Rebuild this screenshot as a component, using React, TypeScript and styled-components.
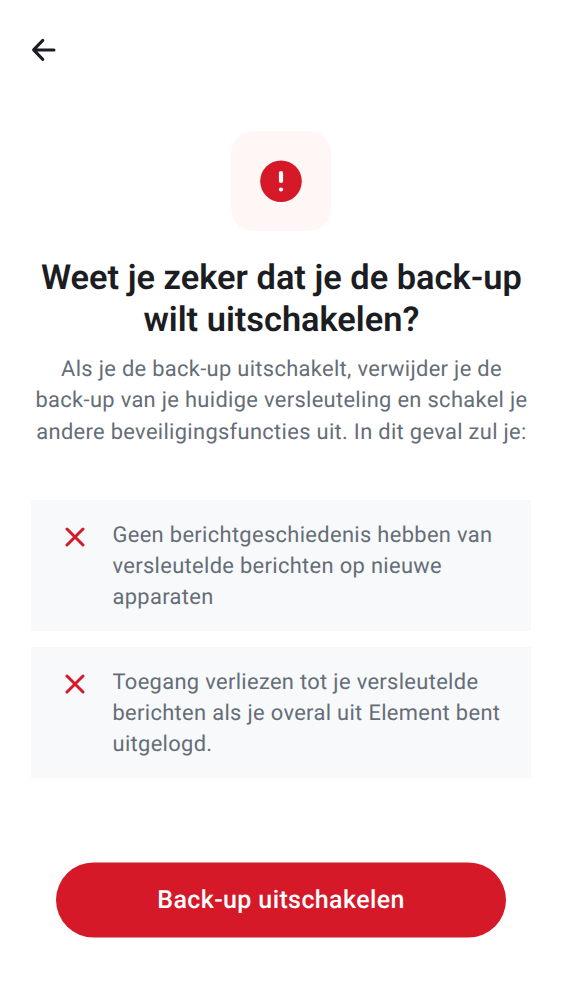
import React from 'react';
import styled, { createGlobalStyle } from 'styled-components';

const GlobalStyle = createGlobalStyle`
  * { box-sizing: border-box; }
  body {
    margin: 0;
    background: #fff;
    font-family: Roboto, sans-serif;
    text-rendering: geometricPrecision;
  }
`;

const Screen = styled.main`
  display: flex;
  flex-direction: column;
  width: 562px;
  height: 1000px;
  padding: 31px 31px 63px;
  background: #fff;
`;

const BackButton = styled.button`
  display: flex;
  align-self: flex-start;
  width: 26px;
  height: 38px;
  padding: 0;
  border: 0;
  background: none;
  align-items: center;
`;

const Header = styled.header`
  display: flex;
  flex-direction: column;
  align-items: center;
  margin-top: 62px;
  text-align: center;
`;

const AlertTile = styled.div`
  display: flex;
  align-items: center;
  justify-content: center;
  width: 100px;
  height: 100px;
  border-radius: 22px;
  background: #fff7f6;
`;

const Line = styled.span<{ $spacing?: number }>`
  display: block;
  white-space: nowrap;
  letter-spacing: ${(p) => p.$spacing ?? 0}px;
`;

const Title = styled.h1`
  margin: 26px 0 0;
  padding-left: 0.8px;
  font-size: 34.375px;
  line-height: 42px;
  font-weight: 600;
  color: #1b1d22;
`;

const Description = styled.p`
  margin: 13px 0 0;
  padding-left: 1px;
  font-size: 21.875px;
  line-height: 31.25px;
  color: #656d77;
`;

const List = styled.ul`
  display: flex;
  flex-direction: column;
  gap: 16px;
  margin: 52px 0 0;
  padding: 0;
  list-style: none;
`;

const Item = styled.li`
  display: flex;
  height: 131px;
  padding: 20px 25px 0 34px;
  background: #f7f9fb;
`;

const ItemIcon = styled.span`
  display: flex;
  width: 20px;
  height: 20px;
  margin: 7.6px 27.5px 0 0;
`;

const ItemText = styled.div`
  font-size: 21.875px;
  line-height: 31.25px;
  color: #656d77;
`;

const DangerButton = styled.button`
  height: 75px;
  margin: auto 25px 0;
  padding: 0;
  border: 0;
  border-radius: 38px;
  background: #d51928;
  color: #fff;
  font-family: inherit;
  font-size: 25px;
  font-weight: 500;
  text-rendering: inherit;
  transform: translateY(0.5px);
`;

const items = [
  ['Geen berichtgeschiedenis hebben van', 'versleutelde berichten op nieuwe', 'apparaten'],
  ['Toegang verliezen tot je versleutelde', 'berichten als je overal uit Element bent', 'uitgelogd.'],
];

export default function App() {
  return (
    <Screen>
      <GlobalStyle />
      <BackButton aria-label="Terug">
        <svg width="26" height="26" viewBox="0 0 26 26" fill="none" stroke="#1b1d22" strokeWidth="3" strokeLinecap="round" strokeLinejoin="round">
          <path d="M11.8 3.4 2.6 12.9l9.2 9.5M3 12.9h20" />
        </svg>
      </BackButton>
      <Header>
        <AlertTile>
          <svg width="42" height="42" viewBox="0 0 42 42">
            <circle cx="21" cy="21.2" r="20.8" fill="#d51928" />
            <path d="M21 13v8" stroke="#fff" strokeWidth="4.2" strokeLinecap="round" />
            <circle cx="21" cy="29.5" r="2.1" fill="#fff" />
          </svg>
        </AlertTile>
        <Title>
          <Line $spacing={0.02}>Weet je zeker dat je de back-up</Line>
          <Line>wilt uitschakelen?</Line>
        </Title>
        <Description>
          <Line $spacing={0.33}>Als je de back-up uitschakelt, verwijder je de</Line>
          <Line $spacing={0.33}>back-up van je huidige versleuteling en schakel je</Line>
          <Line $spacing={0.33}>andere beveiligingsfuncties uit. In dit geval zul je:</Line>
        </Description>
      </Header>
      <List>
        {items.map((lines) => (
          <Item key={lines[0]}>
            <ItemIcon>
              <svg width="20" height="20" viewBox="0 0 20 20" stroke="#d51928" strokeWidth="3" strokeLinecap="round">
                <path d="m2 2 16 16M18 2 2 18" />
              </svg>
            </ItemIcon>
            <ItemText>
              {lines.map((line) => (
                <Line key={line} $spacing={0.34}>{line}</Line>
              ))}
            </ItemText>
          </Item>
        ))}
      </List>
      <DangerButton>
        <Line $spacing={0.39}>Back-up uitschakelen</Line>
      </DangerButton>
    </Screen>
  );
}
